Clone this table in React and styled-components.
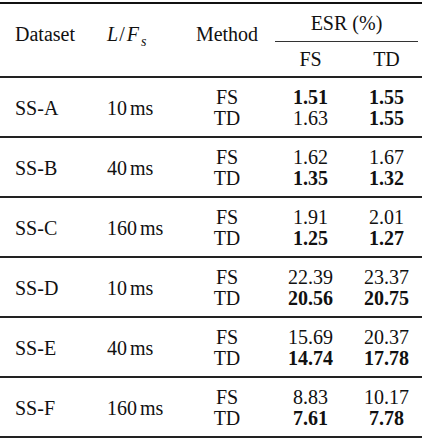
import React from 'react';
import styled, { createGlobalStyle } from 'styled-components';

const GlobalStyle = createGlobalStyle`
  html, body {
    margin: 0;
    padding: 0;
    background: #fff;
  }
  body {
    font-family: "Liberation Serif", "Times New Roman", serif;
    color: #111;
  }
`;

const COLS = '100px 88px 78px 89px 63px';

const Page = styled.div`
  width: 424px;
  height: 440px;
  padding-top: 2px;
  box-sizing: border-box;
`;

const Table = styled.div`
  width: 422px;
  font-family: "Liberation Serif", "Times New Roman", serif;
  font-size: 20px;
  line-height: 21px;
  color: #111;
  border-top: 2px solid #111;
`;

const Header = styled.div`
  display: grid;
  grid-template-columns: ${COLS};
  grid-template-rows: 38px 34px;
  border-bottom: 2px solid #222;
`;

const HeadCell = styled.div`
  grid-row: ${(p) => p.$row || 'auto'};
  grid-column: ${(p) => p.$col || 'auto'};
  display: flex;
  align-items: center;
  justify-content: ${(p) => (p.$left ? 'flex-start' : 'center')};
  padding-left: ${(p) => p.$indent || 0}px;
  padding-bottom: ${(p) => p.$lift || 0}px;
`;

const SpanTitle = styled.div`
  grid-column: 4 / span 2;
  grid-row: 1;
  margin-left: 9px;
  display: flex;
  align-items: center;
  justify-content: center;
  padding-top: 2px;
  border-bottom: 1.5px solid #333;
`;

const Group = styled.div`
  display: grid;
  grid-template-columns: ${COLS};
  height: 58px;
  border-bottom: 2px solid #222;
`;

const Cell = styled.div`
  display: flex;
  flex-direction: column;
  justify-content: center;
  align-items: ${(p) => (p.$left ? 'flex-start' : 'center')};
  padding-left: ${(p) => p.$indent || 0}px;
  padding-top: 2px;
`;

const Line = styled.div`
  font-weight: ${(p) => (p.$bold ? 'bold' : 'normal')};
`;

const MathVar = styled.span`
  font-style: italic;
`;

const Slash = styled.span`
  margin: 0 2px 0 1px;
`;

const Sub = styled.sub`
  font-size: 14px;
  font-style: italic;
  vertical-align: -5px;
  line-height: 0;
  margin-left: 2px;
`;

const Unit = styled.span`
  margin-left: 3px;
`;

const rows = [
  { name: 'SS-A', len: '10', fs: ['1.51', '1.55'], td: ['1.63', '1.55'], bold: [[true, true], [false, true]] },
  { name: 'SS-B', len: '40', fs: ['1.62', '1.67'], td: ['1.35', '1.32'], bold: [[false, false], [true, true]] },
  { name: 'SS-C', len: '160', fs: ['1.91', '2.01'], td: ['1.25', '1.27'], bold: [[false, false], [true, true]] },
  { name: 'SS-D', len: '10', fs: ['22.39', '23.37'], td: ['20.56', '20.75'], bold: [[false, false], [true, true]] },
  { name: 'SS-E', len: '40', fs: ['15.69', '20.37'], td: ['14.74', '17.78'], bold: [[false, false], [true, true]] },
  { name: 'SS-F', len: '160', fs: ['8.83', '10.17'], td: ['7.61', '7.78'], bold: [[false, false], [true, true]] },
];

export default function App() {
  return (
    <Page>
      <GlobalStyle />
      <Table>
        <Header>
          <HeadCell $row="1 / span 2" $col="1" $left $indent={15} $lift={12}>Dataset</HeadCell>
          <HeadCell $row="1 / span 2" $col="2" $left $indent={7} $lift={12}>
            <span>
              <MathVar>L</MathVar><Slash>/</Slash><MathVar>F</MathVar><Sub>s</Sub>
            </span>
          </HeadCell>
          <HeadCell $row="1 / span 2" $col="3" $lift={12}>Method</HeadCell>
          <SpanTitle>ESR (%)</SpanTitle>
          <HeadCell $row="2" $col="4">FS</HeadCell>
          <HeadCell $row="2" $col="5">TD</HeadCell>
        </Header>
        {rows.map((r) => (
          <Group key={r.name}>
            <Cell $left $indent={15}>{r.name}</Cell>
            <Cell $left $indent={7}>
              <span>{r.len}<Unit>ms</Unit></span>
            </Cell>
            <Cell>
              <Line>FS</Line>
              <Line>TD</Line>
            </Cell>
            <Cell>
              <Line $bold={r.bold[0][0]}>{r.fs[0]}</Line>
              <Line $bold={r.bold[1][0]}>{r.td[0]}</Line>
            </Cell>
            <Cell>
              <Line $bold={r.bold[0][1]}>{r.fs[1]}</Line>
              <Line $bold={r.bold[1][1]}>{r.td[1]}</Line>
            </Cell>
          </Group>
        ))}
      </Table>
    </Page>
  );
}
